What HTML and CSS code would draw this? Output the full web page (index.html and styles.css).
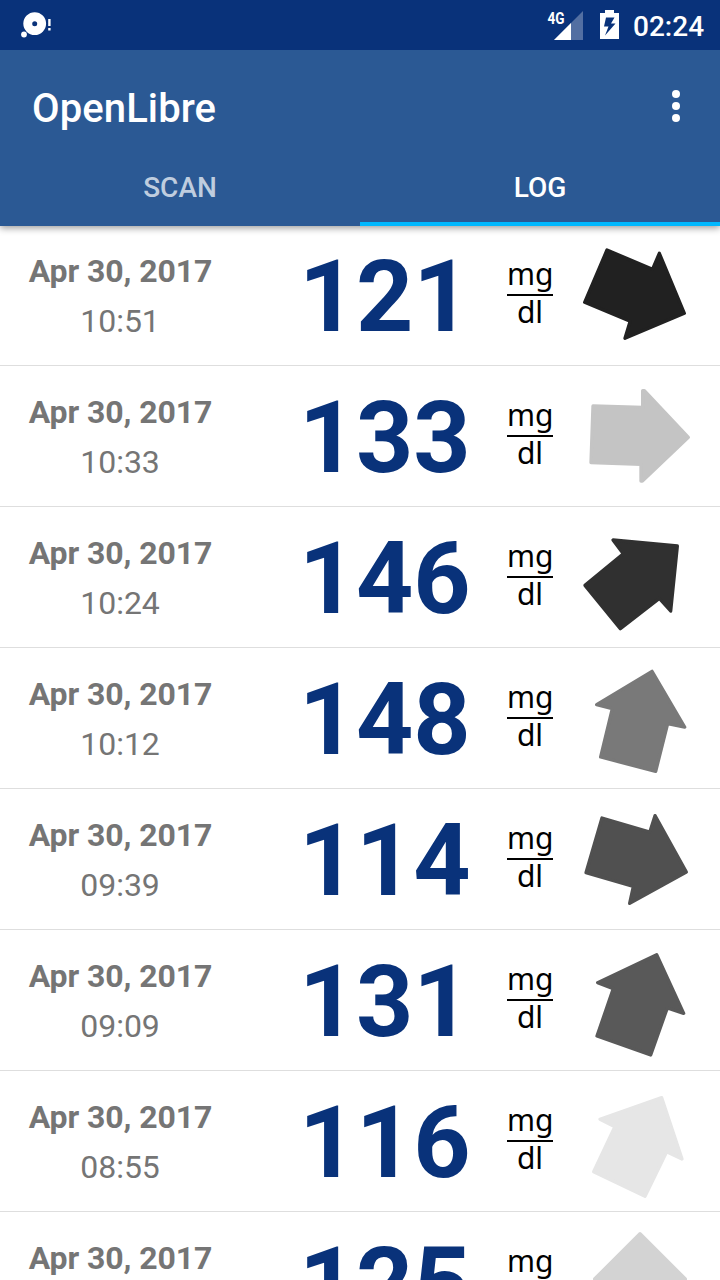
FILE: index.html
```html
<!DOCTYPE html>
<html lang="en">
<head>
<meta charset="utf-8">
<title>OpenLibre</title>
<link rel="stylesheet" href="styles.css">
</head>
<body>
<div class="screen">
  <header class="header">
    <div class="status">
      <svg class="notif" width="32" height="30" viewBox="0 0 32 30"><path fill="#fff" fill-rule="evenodd" d="M14.7 2.2a11.4 11.4 0 1 1 0 22.8a11.4 11.4 0 1 1 0-22.8zM14.7 11.3a2.5 2.5 0 1 0 0 5a2.5 2.5 0 1 0 0-5z"/><circle cx="4" cy="24.5" r="2.9" fill="#fff"/><path d="M28.2 9h2.4v7h-2.4zM28.2 18h2.4v2.4h-2.4z" fill="#fff"/></svg>
      <div class="status-right">
        <span class="net">4G</span>
        <svg class="signal" width="29" height="30" viewBox="0 0 29 30"><path d="M29 0v29H0z" fill="#fff" fill-opacity=".3"/><path d="M17 12v17H0z" fill="#fff"/></svg>
        <svg class="battery" width="19" height="29" viewBox="0 0 19 29"><path fill="#fff" fill-rule="evenodd" d="M5 0h9v3h5v26H0V3h5zM6 7.500L4 16.500h4.500L5 25.500L15.500 13.500h-4.500L14.500 7.500z"/></svg>
        <span class="clock">02:24</span>
      </div>
    </div>
    <div class="appbar">
      <h1 class="title">OpenLibre</h1>
      <svg class="more" width="8" height="32" viewBox="0 0 8 32"><g fill="#fff"><circle cx="4" cy="4" r="4"/><circle cx="4" cy="16" r="4"/><circle cx="4" cy="28" r="4"/></g></svg>
    </div>
    <nav class="tabs"><div class="tab">SCAN</div><div class="tab active">LOG</div></nav>
  </header>
  <main class="list">
    <div class="row">
      <div class="when"><div class="date">Apr 30, 2017</div><div class="time">10:51</div></div>
      <div class="value">121</div>
      <div class="unit"><span class="mg">mg</span><span class="dl">dl</span></div>
      <svg class="arrow" viewBox="0 30 450 420" color="#212121"><path d="M111 105L247.500 163L268 115L343 295L165 370L180.500 319L44 262z"/></svg>
    </div>
    <div class="row">
      <div class="when"><div class="date">Apr 30, 2017</div><div class="time">10:33</div></div>
      <div class="value">133</div>
      <div class="unit"><span class="mg">mg</span><span class="dl">dl</span></div>
      <svg class="arrow" viewBox="0 453 450 420" color="#c4c4c4"><path d="M69 573L218 577V527H223L355 667L217 798H213V748L63 743z"/></svg>
    </div>
    <div class="row">
      <div class="when"><div class="date">Apr 30, 2017</div><div class="time">10:24</div></div>
      <div class="value">146</div>
      <div class="unit"><span class="mg">mg</span><span class="dl">dl</span></div>
      <svg class="arrow" viewBox="0 -9 450 420" color="#303030"><path d="M129 90L322 108L302 303L268 265L151 356L45 226L160 131z"/></svg>
    </div>
    <div class="row">
      <div class="when"><div class="date">Apr 30, 2017</div><div class="time">10:12</div></div>
      <div class="value">148</div>
      <div class="unit"><span class="mg">mg</span><span class="dl">dl</span></div>
      <svg class="arrow" viewBox="0 414 450 420" color="#797979"><path d="M246 484L344 651L293 641L257 784L92 741L127 596L80 584z"/></svg>
    </div>
    <div class="row">
      <div class="when"><div class="date">Apr 30, 2017</div><div class="time">09:39</div></div>
      <div class="value">114</div>
      <div class="unit"><span class="mg">mg</span><span class="dl">dl</span></div>
      <svg class="arrow" viewBox="0 -3 450 420" color="#505050"><path d="M96 84L239.500 126L255 77L349 246L179 340L190 289.500L48 248z"/></svg>
    </div>
    <div class="row">
      <div class="when"><div class="date">Apr 30, 2017</div><div class="time">09:09</div></div>
      <div class="value">131</div>
      <div class="unit"><span class="mg">mg</span><span class="dl">dl</span></div>
      <svg class="arrow" viewBox="0 420 450 420" color="#595959"><path d="M260 494L341 670L292 653.500L242 795L81 738L130 596L83 578z"/></svg>
    </div>
    <div class="row">
      <div class="when"><div class="date">Apr 30, 2017</div><div class="time">08:55</div></div>
      <div class="value">116</div>
      <div class="unit"><span class="mg">mg</span><span class="dl">dl</span></div>
      <svg class="arrow" viewBox="0 3 450 420" color="#e6e6e6"><path d="M275 83L336 267L290 245L225 379L71 305L134.700 170L90 148z"/></svg>
    </div>
    <div class="row">
      <div class="when"><div class="date">Apr 30, 2017</div></div>
      <div class="value">125</div>
      <div class="unit"><span class="mg">mg</span></div>
      <svg class="arrow" viewBox="0 426 450 420" color="#d3d3d3"><path d="M210 491L346 627V633H300V780H120V633H74V627z"/></svg>
    </div>
  </main>
</div>
</body>
</html>
```
FILE: styles.css
```css
* { box-sizing: border-box; }
body { margin: 0; background: #fff; font-family: Roboto, sans-serif; }
.screen { width: 720px; height: 1280px; overflow: hidden; display: flex; flex-direction: column; }
.header { flex: none; position: relative; z-index: 1; height: 226px; margin-bottom: -1px; background: #2b5994; color: #fff; box-shadow: 0 2px 7px rgba(0, 0, 0, .4); }
.status { height: 50px; padding: 10px 16px 0 20px; background: #09327a; display: flex; justify-content: space-between; }
.status-right { display: flex; }
.net { font-size: 17px; line-height: 17px; font-weight: 700; width: 7px; white-space: nowrap; transform: translateX(.5px) scaleX(.8); transform-origin: 0 0; }
.signal { margin-top: 1px; }
.battery { margin-left: 17px; }
.clock { margin-left: 14px; font-size: 28px; line-height: 34px; font-weight: 500; width: 71px; white-space: nowrap; }
.appbar { height: 112px; padding: 0 40px 0 32px; display: flex; align-items: center; justify-content: space-between; }
.title { margin: 5px 0 0; font-size: 40px; line-height: 48px; font-weight: 500; letter-spacing: .1px; }
.tabs { height: 64px; display: grid; grid-template-columns: 1fr 1fr; }
.tab { padding-top: 10px; text-align: center; font-size: 28px; line-height: 32px; font-weight: 500; color: #bfcddf; }
.tab.active { color: #fff; border-bottom: 4px solid #00b8ff; }
.list { display: flex; flex-direction: column; }
.row { flex: none; height: 141px; border-bottom: 1px solid #dedede; display: flex; }
.when { width: 240px; padding-top: 26px; text-align: center; color: #757575; font-size: 32px; line-height: 40px; }
.date { font-weight: 700; letter-spacing: -.08px; padding-left: 1px; }
.time { margin-top: 10px; }
.value { width: 240px; padding: 13px 0 0 59px; font-size: 100px; line-height: 118px; letter-spacing: -.3px; font-weight: 700; color: #09327a; }
.unit { width: 90px; padding: 34px 0 0 27px; font-family: "Noto Sans", sans-serif; font-size: 30px; line-height: 30px; color: #000; }
.mg, .dl { display: block; width: 46px; text-align: center; }
.mg { height: 37px; border-bottom: 2px solid #000; }
.dl { line-height: 31px; }
.arrow { width: 150px; height: 140px; fill: currentColor; stroke: currentColor; stroke-width: 10; stroke-linejoin: round; }
```
